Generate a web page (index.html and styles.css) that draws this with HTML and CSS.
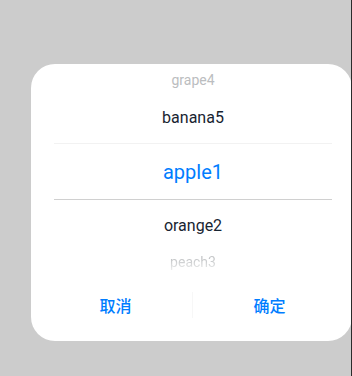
FILE: index.html
```html
<!DOCTYPE html>
<html>
<head>
<meta charset="utf-8">
<link rel="stylesheet" href="styles.css">
</head>
<body>
<div class="page">
  <div class="dialog">
    <div class="picker">
      <div class="row far top">grape4</div>
      <div class="row near above">banana5</div>
      <div class="row selected">apple1</div>
      <div class="row near below">orange2</div>
      <div class="row far bottom"><span class="fade">peach3</span></div>
    </div>
    <div class="buttons">
      <div class="btn">取消</div>
      <div class="vdiv"></div>
      <div class="btn">确定</div>
    </div>
  </div>
</div>
</body>
</html>
```
FILE: styles.css
```css
html, body {
  margin: 0;
  padding: 0;
}
body {
  width: 352px;
  height: 376px;
  background: #cccccc;
  overflow: hidden;
  font-family: Roboto, "Noto Sans CJK SC", sans-serif;
}
.page {
  width: 352px;
  height: 376px;
  box-sizing: border-box;
  border-right: 1px solid #2b2b2b;
  padding-top: 64px;
  padding-left: 31px;
  overflow: hidden;
}
.dialog {
  width: 321px;
  height: 277px;
  background: #ffffff;
  border-radius: 24px;
  display: flex;
  flex-direction: column;
}
.picker {
  height: 217px;
  display: flex;
  flex-direction: column;
  padding: 0 20px 0 23px;
}
.row {
  display: flex;
  align-items: center;
  justify-content: center;
  text-align: center;
}
.top {
  height: 32px;
  font-size: 14px;
  color: #bbbdc0;
}
.above {
  height: 47px;
  padding-bottom: 5px;
  box-sizing: border-box;
  font-size: 16px;
  color: #182431;
}
.selected {
  height: 57px;
  box-sizing: border-box;
  border-top: 1px solid #f2f2f2;
  border-bottom: 1px solid #d0d0d0;
  font-size: 20px;
  font-weight: 400;
  color: #007dff;
}
.below {
  height: 50px;
  font-size: 16px;
  color: #182431;
}
.bottom {
  height: 24px;
  font-size: 14px;
}
.fade {
  background: linear-gradient(to bottom, #c2c4c6 30%, #eceded 100%);
  -webkit-background-clip: text;
  background-clip: text;
  color: transparent;
}
.buttons {
  height: 48px;
  display: flex;
  align-items: center;
  padding: 0 6px 0 8px;
}
.btn {
  flex: 1;
  text-align: center;
  font-family: "Noto Sans CJK SC", sans-serif;
  font-size: 16px;
  font-weight: 500;
  color: #007dff;
}
.vdiv {
  width: 1px;
  height: 26px;
  background: #f7f7f7;
}
```
